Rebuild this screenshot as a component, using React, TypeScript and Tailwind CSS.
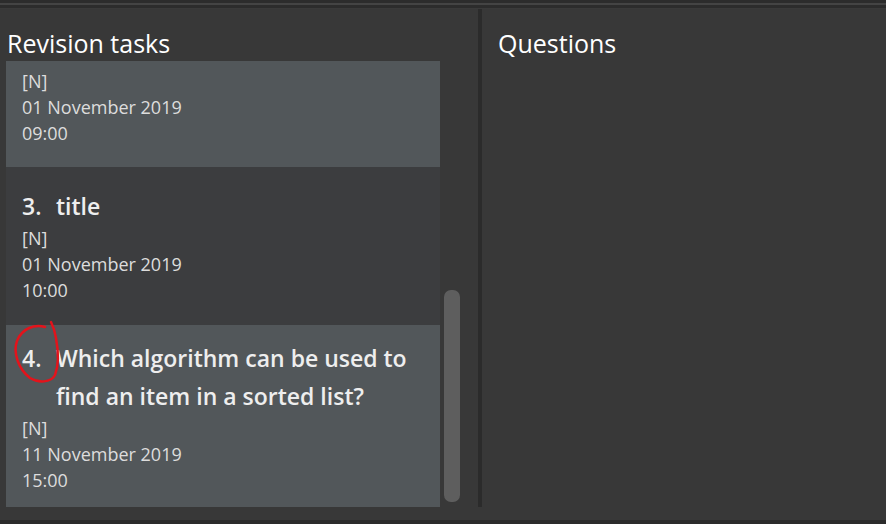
const font = { fontFamily: '"Open Sans", "Noto Sans", sans-serif' };

interface Task {
  num?: string;
  title?: string;
  type: string;
  date: string;
  time: string;
  pad: string;
  bg: string;
}

const tasks: Task[] = [
  { type: "[N]", date: "01 November 2019", time: "09:00", pad: "pt-[7px] pb-[21px]", bg: "bg-[#52575a]" },
  {
    num: "3.",
    title: "title",
    type: "[N]",
    date: "01 November 2019",
    time: "10:00",
    pad: "pt-[20px] pb-[22px]",
    bg: "bg-[#3c3d3f]",
  },
  {
    num: "4.",
    title: "Which algorithm can be used to find an item in a sorted list?",
    type: "[N]",
    date: "11 November 2019",
    time: "15:00",
    pad: "pt-[14px] pb-[14px]",
    bg: "bg-[#52575a]",
  },
];

function TaskCard({ task }: { task: Task }) {
  return (
    <div className={`relative pl-[16px] pr-[20px] ${task.pad} ${task.bg}`}>
      {task.num && (
        <div className="flex">
          <span className="w-[34px] shrink-0 text-[23px] leading-[38px] font-semibold text-[#eeeeee]">
            {task.num}
          </span>
          <span className="text-[23px] leading-[38px] font-semibold text-[#eeeeee]">{task.title}</span>
        </div>
      )}
      <div className="text-[18px] leading-[26px] text-[#dddddd]">
        <div>{task.type}</div>
        <div>{task.date}</div>
        <div>{task.time}</div>
      </div>
      {task.num === "4." && (
        // red hand-drawn circle around the number
        <svg className="absolute left-[4px] top-[-6px]" width="54" height="68" viewBox="0 0 54 68">
          <path
            d="M35 8 C 25 5, 12 9, 7 22 C 3 33, 8 50, 20 59 C 28 64, 41 64, 45 56 C 49 46, 48 30, 46 19 C 45 13, 43 7, 41 3"
            fill="none"
            stroke="#e3131b"
            strokeWidth="2.5"
            strokeLinecap="round"
          />
        </svg>
      )}
    </div>
  );
}

export default function App() {
  return (
    <div className="w-[886px] h-[524px] bg-[#383838] flex flex-col overflow-hidden" style={font}>
      <div className="h-[9px] flex flex-col">
        <div className="h-[3px] bg-[#2c2c2c]" />
        <div className="h-[2px] bg-[#444444]" />
        <div className="h-[3px] bg-[#2c2c2c]" />
        <div className="h-[1px] bg-[#3a3a3a]" />
      </div>
      <div className="flex-1 flex min-h-0">
        <div className="w-[478px] flex flex-col">
          <div className="h-[52px] pl-[7px] pt-[19px] text-[25px] leading-[30px] text-white">Revision tasks</div>
          <div className="flex-1 flex min-h-0 pl-[6px]">
            <div className="w-[434px] flex flex-col">
              {tasks.map((t, i) => (
                <TaskCard key={i} task={t} />
              ))}
            </div>
            <div className="w-[22px] pl-[4px] pt-[229px]">
              <div className="w-[16px] h-[212px] rounded-[7px] bg-[#5e5e5e]" />
            </div>
          </div>
        </div>
        <div className="w-[4px] bg-[#2b2b2b]" />
        <div className="flex-1 pl-[16px] pt-[19px] text-[25px] leading-[30px] text-white">Questions</div>
      </div>
      <div className="h-[13px]" />
      <div className="h-[4px] bg-[#2b2b2b]" />
    </div>
  );
}
